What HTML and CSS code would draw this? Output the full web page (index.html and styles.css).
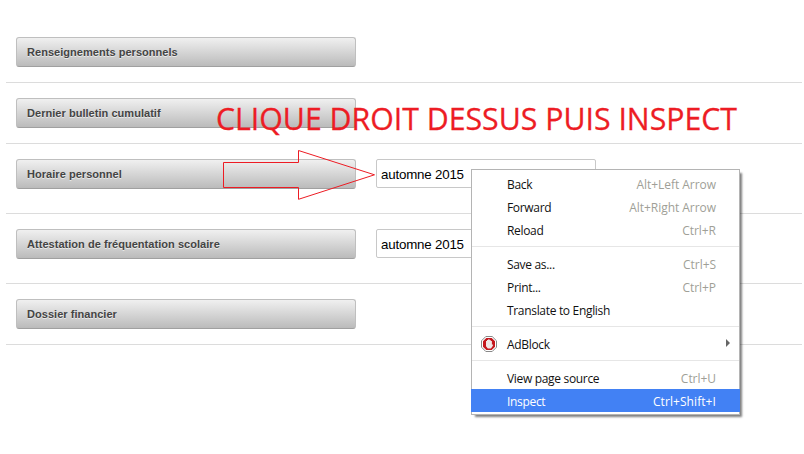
FILE: index.html
```html
<!DOCTYPE html>
<html lang="fr">
<head>
<meta charset="utf-8">
<title>Dossier</title>
<link rel="stylesheet" href="styles.css">
</head>
<body>
<main class="rows">
  <div class="row"><button class="btn">Renseignements personnels</button></div>
  <div class="row"><button class="btn">Dernier bulletin cumulatif</button></div>
  <div class="row tall"><button class="btn">Horaire personnel</button><div class="select">automne 2015</div></div>
  <div class="row tall"><button class="btn">Attestation de fréquentation scolaire</button><div class="select">automne 2015</div></div>
  <div class="row"><button class="btn">Dossier financier</button></div>
</main>
<svg class="annotation" width="804" height="454" viewBox="0 0 804 454">
  <text class="note" x="216" y="129.500" textLength="521" lengthAdjust="spacingAndGlyphs">CLIQUE DROIT DESSUS PUIS INSPECT</text>
  <path class="arrow" d="M223.5 162.5H298.5V150.5L374.5 174.8L298.5 199.3V187.5H223.5Z"/>
</svg>
<div class="menu">
  <div class="item"><span>Back</span><kbd>Alt+Left Arrow</kbd></div>
  <div class="item"><span>Forward</span><kbd>Alt+Right Arrow</kbd></div>
  <div class="item"><span>Reload</span><kbd>Ctrl+R</kbd></div>
  <div class="sep"></div>
  <div class="item"><span>Save as...</span><kbd>Ctrl+S</kbd></div>
  <div class="item"><span>Print...</span><kbd>Ctrl+P</kbd></div>
  <div class="item"><span>Translate to English</span></div>
  <div class="sep"></div>
  <div class="item">
    <svg class="icon" width="16" height="16" viewBox="0 0 16 16"><path d="M4.800.5h6.400l4.300 4.300v6.400l-4.300 4.300H4.800L.5 11.200V4.800Z" fill="#fff" stroke="#888"/><path d="M5.300 2h5.400L14 5.300v5.400L10.700 14H5.300L2 10.700V5.300Z" fill="#c4161c"/><path d="M5 5h1V4h1.200v-.8h1.300V4h1.200v1h1.200v3.500h1v1.200L10 12.500H6.800L5 10.200Z" fill="#f0e6e6"/></svg>
    <span>AdBlock</span><i class="more"></i>
  </div>
  <div class="sep"></div>
  <div class="item"><span>View page source</span><kbd>Ctrl+U</kbd></div>
  <div class="item active"><span>Inspect</span><kbd>Ctrl+Shift+I</kbd></div>
</div>
</body>
</html>
```
FILE: styles.css
```css
* { box-sizing: border-box; }
body { margin: 0; background: #fff; overflow: hidden; font-family: "Liberation Sans", sans-serif; }
.rows { padding: 22px 2px 0 6px; }
.row { display: flex; align-items: flex-start; gap: 20px; height: 61px; padding: 15px 10px 0; border-bottom: 1px solid #dcdcdc; }
.tall { height: 70px; }
.btn {
  width: 340px; height: 30px; padding: 0 10px; text-align: left;
  font: bold 11px "Liberation Sans", sans-serif; letter-spacing: .04px; color: #444;
  text-shadow: 0 1px 0 rgba(255,255,255,.6);
  background: linear-gradient(#f0f0f0, #bbb);
  border: 1px solid #bfbfbf; border-bottom-color: #a0a0a0; border-radius: 3px;
}
.select { width: 220px; height: 29px; padding-left: 4px; line-height: 29px; font-size: 13.33px; letter-spacing: -.2px; color: #000; background: #fff; border: 1px solid #c8c8c8; border-radius: 2px; }
.annotation { position: absolute; left: 0; top: 0; }
.note { font: 31px "Open Sans", sans-serif; fill: #ed1c24; stroke: #ed1c24; stroke-width: .3; }
.arrow { fill: none; stroke: #ed1c24; stroke-width: 1; }
.menu {
  position: absolute; left: 471px; top: 169px; width: 269px; height: 246px; padding: 2px 0;
  background: #fff; border: 1px solid #b4b4b4; box-shadow: 3px 3px 2px -1px rgba(0,0,0,.5);
  font: 12px "Open Sans", sans-serif; color: #111;
}
.item { position: relative; display: flex; justify-content: space-between; align-items: center; height: 23px; padding: 2px 23px 0 35px; letter-spacing: -.32px; white-space: nowrap; }
.item kbd { font: inherit; letter-spacing: -.04px; color: #a09f97; }
.sep { height: 11px; padding-top: 5px; }
.sep::before { content: ""; display: block; height: 1px; background: #e6e6e6; }
.active { margin: 0 -1px; padding-left: 36px; padding-right: 24px; background: #4281f4; color: #fff; }
.item.active kbd { color: #fff; letter-spacing: .08px; }
.icon { position: absolute; left: 9px; top: 4px; }
.more { position: absolute; right: 9px; top: 7px; border: 4px solid transparent; border-left-color: #666; border-right: 0; }
```
